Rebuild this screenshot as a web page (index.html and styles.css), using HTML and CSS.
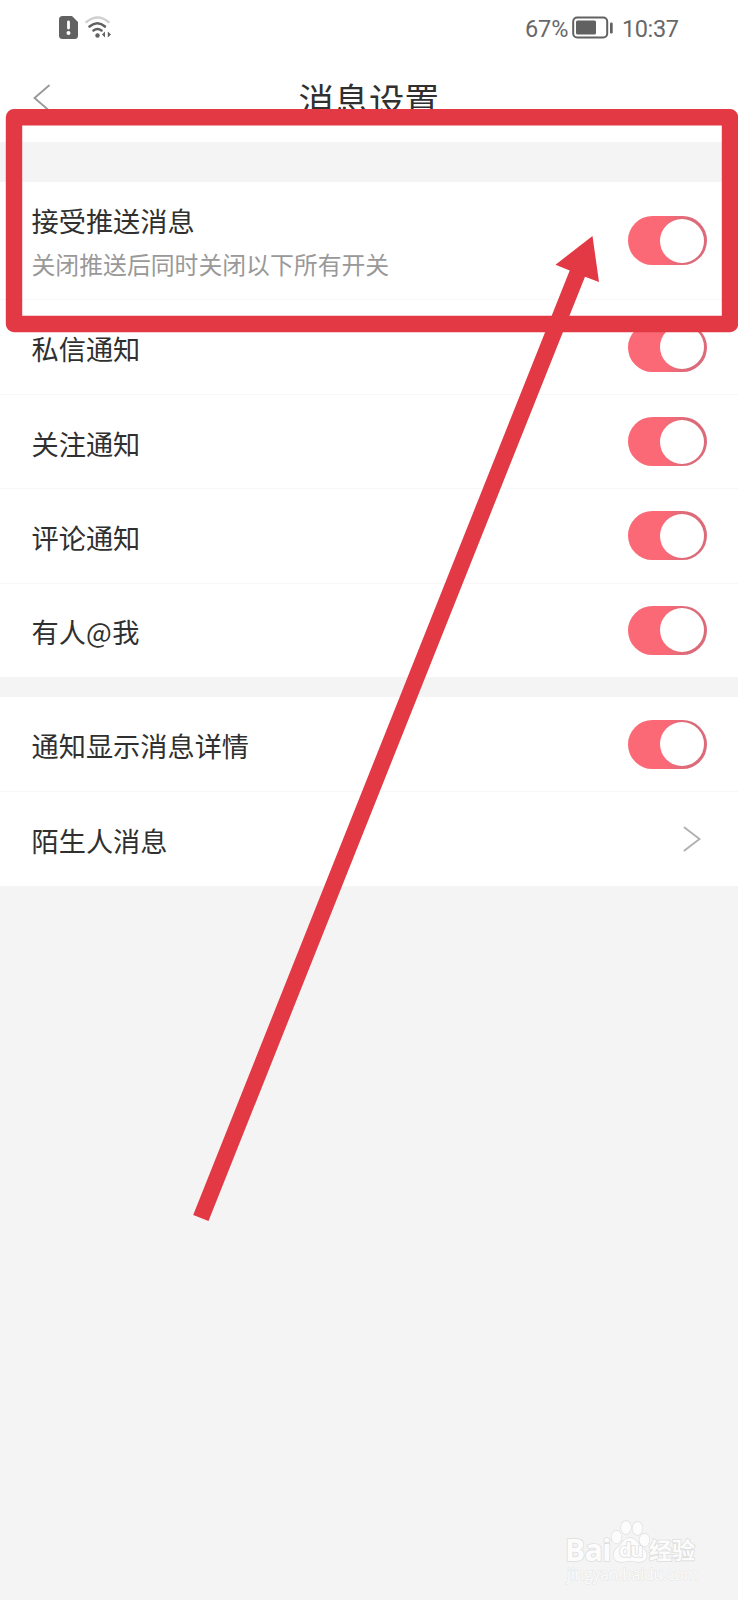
FILE: index.html
```html
<!DOCTYPE html>
<html lang="zh-CN">
<head>
<meta charset="utf-8">
<title>消息设置</title>
<link rel="stylesheet" href="styles.css">
</head>
<body>
<div class="screen">
  <div class="status">
    <div class="status-left">
      <svg width="19" height="23" viewBox="0 0 19 23"><path d="M3.500 0H13L19 6V19.500Q19 23 15.500 23H3.500Q0 23 0 19.500V3.500Q0 0 3.500 0Z" fill="#616161"/><path d="M9.500 6V12" stroke="#fff" stroke-width="2.800" stroke-linecap="round"/><circle cx="9.500" cy="17" r="2" fill="#fff"/></svg>
      <svg width="27" height="23" viewBox="0 0 27 23" fill="none" stroke-linecap="round"><path d="M1.500 6Q12.500-3 23.500 6" stroke="#d0d0d0" stroke-width="2.500"/><path d="M4.500 10.500Q12.500 4 20 10.500M8.500 14.500Q12.500 11.500 16.500 14.500" stroke="#616161" stroke-width="2.600"/><circle cx="12.500" cy="19.500" r="2.200" fill="#616161"/><path d="M17 18.500L20 15.500V21.500ZM26 18.500L22.800 15.500V21.500Z" fill="#616161"/></svg>
    </div>
    <div class="status-right">
      <span class="percent">67%</span>
      <svg width="42" height="23" viewBox="0 0 42 23"><rect x="1.200" y="1.500" width="34" height="20" rx="4" fill="none" stroke="#616161" stroke-width="2"/><rect x="4" y="4.500" width="20" height="14" rx="1.500" fill="#616161"/><rect x="38" y="6.500" width="2.700" height="11" rx="1.200" fill="#616161"/></svg>
      <span class="time">10:37</span>
    </div>
  </div>
  <header class="titlebar">
    <svg class="back" width="18" height="28" viewBox="0 0 18 28" fill="none" stroke="#979797" stroke-width="1.800" stroke-linecap="round"><path d="M16 1.500L1.500 14L16 26.500"/></svg>
    <h1 class="title">消息设置</h1>
  </header>
  <main class="settings">
    <section class="group">
      <div class="row row-main">
        <div class="labels"><div class="label">接受推送消息</div><div class="hint">关闭推送后同时关闭以下所有开关</div></div>
        <span class="toggle"><i class="knob"></i></span>
      </div>
      <div class="row row-tall"><span class="label">私信通知</span><span class="toggle"><i class="knob"></i></span></div>
      <div class="row"><span class="label">关注通知</span><span class="toggle"><i class="knob"></i></span></div>
      <div class="row"><span class="label">评论通知</span><span class="toggle"><i class="knob"></i></span></div>
      <div class="row"><span class="label">有人<span class="at">@</span>我</span><span class="toggle"><i class="knob"></i></span></div>
    </section>
    <section class="group">
      <div class="row row-tall"><span class="label">通知显示消息详情</span><span class="toggle"><i class="knob"></i></span></div>
      <div class="row"><span class="label">陌生人消息</span><svg class="more" width="18" height="26" viewBox="0 0 18 26" fill="none" stroke="#b0b0b0" stroke-width="1.900" stroke-linecap="round"><path d="M1.500 1.500L16.500 13L1.500 24.500"/></svg></div>
    </section>
  </main>

  <svg class="annotation" width="738" height="1600" viewBox="0 0 738 1600">
    <rect x="14" y="117.300" width="716" height="206.700" fill="none" stroke="#e23945" stroke-width="16.400" stroke-linejoin="round"/>
    <path d="M592.500 236L599 282L585 276.700L208.500 1221L193.200 1215L569.700 270.500L555.500 264.700Z" fill="#e23945"/>
  </svg>

  <div class="watermark">
    <div class="brand">
      <span class="bai">Bai</span>
      <span class="paw">
        <svg width="40" height="44" viewBox="0 0 40 44" fill="#fcfcfc" stroke="#dedede" stroke-width="1.300"><ellipse cx="6.500" cy="17" rx="5" ry="6.300"/><ellipse cx="16" cy="7.500" rx="5" ry="6.500"/><ellipse cx="27.500" cy="8.500" rx="5" ry="6.500"/><ellipse cx="34.500" cy="20" rx="5" ry="6.300"/><path d="M20 18C14 18 12 24 7 28C1 33 3 42 11 42C15 42 17 41 20 41C23 41 25 42 29 42C38 42 39 33 33 28C28 24 26 18 20 18Z"/></svg>
        <span class="du">du</span>
      </span>
      <span class="exp">经验</span>
    </div>
    <div class="url">jingyan.baidu.com</div>
  </div>
</div>
</body>
</html>
```
FILE: styles.css
```css
* { box-sizing: border-box; }
body { margin: 0; background: #f4f4f4; font-family: "Noto Sans CJK SC", sans-serif; color: #303030; }
.screen { position: relative; width: 738px; height: 1600px; overflow: hidden; background: #f4f4f4; }
.status { display: flex; justify-content: space-between; height: 56px; padding: 16px 59px 0; background: #fff; }
.status-left { display: flex; gap: 7px; height: 23px; }
.status-right { display: flex; align-items: center; height: 23px; color: #686868; font: 23.500px/24px Roboto, sans-serif; }
.percent { width: 47px; padding-top: 2px; letter-spacing: -0.100px; }
.status-right svg { margin-right: 8px; }
.time { width: 57px; padding-top: 2px; letter-spacing: -0.400px; }
.titlebar { display: grid; grid-template-columns: 1fr auto 1fr; align-items: center; height: 86px; padding: 0 33px; background: #fff; }
.back { margin-top: -3px; }
.title { grid-column: 2; margin: 0; font-size: 35.300px; line-height: 52px; font-weight: 400; }
.settings { display: flex; flex-direction: column; gap: 20px; padding-top: 40px; }
.group { background: #fff; }
.row { display: flex; align-items: center; justify-content: space-between; height: 94.300px; padding: 0 31px 0 31.500px; border-bottom: 1px solid #f7f7f7; }
.row:last-child { height: 93.800px; border-bottom: 0; }
.row-tall { height: 95px; }
.row-main { height: 118px; }
.label { padding-top: 2px; font-size: 27.200px; line-height: 40px; }
.row-main .label { padding-top: 0; }
.hint { margin-top: 6px; color: #999; font-size: 23.850px; line-height: 36px; }
.at { letter-spacing: 0.500px; }
.toggle { display: flex; justify-content: flex-end; align-items: center; width: 79px; height: 49px; padding-right: 3px; border-radius: 25px; background: linear-gradient(90deg, #fb6976 45%, #dc6b7a 75%); }
.knob { width: 44px; height: 44px; border-radius: 50%; background: #fff; }
.more { margin-right: 6px; }
.annotation { position: absolute; left: 0; top: 0; }
.watermark { position: absolute; left: 565px; top: 1519px; width: 134px; color: #fcfcfc; }
.brand { display: flex; align-items: flex-end; height: 45px; -webkit-text-stroke: 1.600px #dedede; paint-order: stroke fill; }
.bai { width: 45px; margin-bottom: -2px; font: 700 30px/32px "Open Sans", sans-serif; letter-spacing: -0.500px; }
.paw { position: relative; width: 40px; height: 44px; }
.du { position: absolute; left: 9px; top: 19px; font: 700 20px/22px "Open Sans", sans-serif; letter-spacing: -1.500px; }
.exp { margin: 0 0 2px -1px; font-size: 23px; line-height: 26px; font-weight: 700; }
.url { padding: 2px 0 0 2px; font: 15.400px/18px "Open Sans", sans-serif; -webkit-text-stroke: 1px #e5e5e5; paint-order: stroke fill; white-space: nowrap; }
```
